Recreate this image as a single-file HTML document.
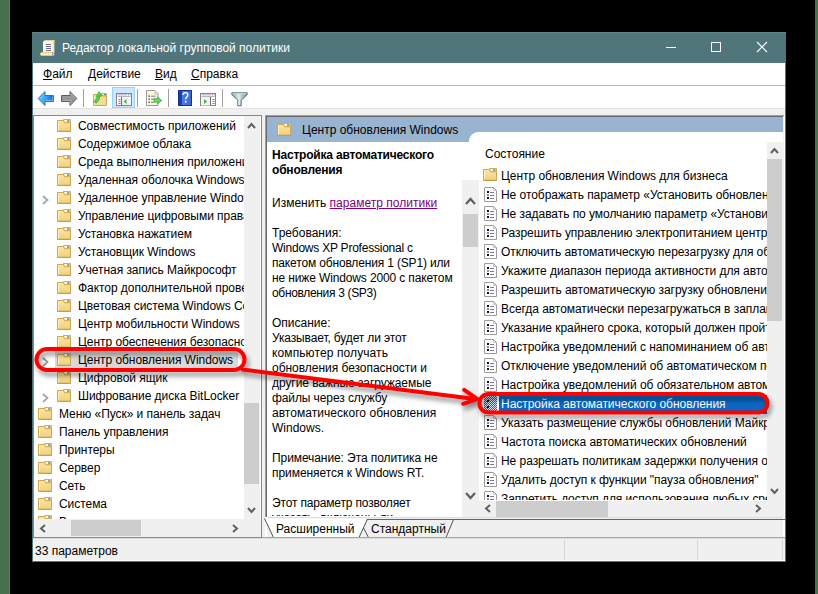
<!DOCTYPE html><html><head><meta charset="utf-8"><style>
*{margin:0;padding:0;box-sizing:border-box}
html,body{width:818px;height:594px;overflow:hidden;background:#000}
body{position:relative;font-family:"Liberation Sans",sans-serif;font-size:12px;color:#000}
.a{position:absolute}
.t{position:absolute;white-space:nowrap}
.u{text-decoration:underline}
svg{position:absolute;overflow:visible}
</style></head><body><div class="a" style="left:0px;top:0px;width:10px;height:594px;background:#48724f;border-right:1px solid #4f8057"></div>
<div class="a" style="left:815px;top:0px;width:3px;height:594px;background:#4b7150"></div>
<div class="a" style="left:32px;top:32px;width:754px;height:530px;background:#fff;border:1px solid #50757b"></div>
<div class="a" style="left:32px;top:32px;width:754px;height:31px;background:#50757b;border-top:1px solid #62858a"></div>
<svg style="left:38px;top:37.5px" width="20" height="20" viewBox="0 0 20 20">
<path d="M5.5 3.5L7 2.5h9.5l-.5 1V14.5H5.5z" fill="#fdf8e2" stroke="#d9d2ae" stroke-width="1"/>
<path d="M5.5 4v10" stroke="#fffef5"/>
<path d="M8 6.5h5M8 8.5h5M8 10.5h5M8 12.5h5" stroke="#6e6e96" stroke-width="1"/>
<path d="M16.5 3.2l1.3 1-1.3 1.8-.8-1z" fill="#c9963c"/>
<path d="M3.5 14.5h11.5c.6 0 1 .7 1 1.5s-.4 1.5-1 1.5H3.5c-.6 0-1-.7-1-1.5s.4-1.5 1-1.5z" fill="#fbf3cf" stroke="#d6c98e" stroke-width="1"/>
<path d="M5 16h1M7.5 16h1M10 16h1" stroke="#f0c870"/>
<path d="M14.5 14.5v3" stroke="#9a9ab0"/>
</svg>
<div class="t" style="left:62px;top:40px;line-height:16px;color:#fff">Редактор локальной групповой политики</div>
<div class="a" style="left:666px;top:47px;width:10px;height:1px;background:#fff"></div>
<div class="a" style="left:711px;top:42px;width:10px;height:10px;border:1px solid #fff"></div>
<svg style="left:756px;top:41px" width="12" height="12" viewBox="0 0 12 12"><path d="M1 1L11 11M11 1L1 11" stroke="#fff" stroke-width="1.1"/></svg>
<div class="a" style="left:33px;top:85px;width:752px;height:1px;background:#b9b9b9"></div>
<div class="t" style="left:43px;top:66px;line-height:16px;"><span class="u">Ф</span>айл</div>
<div class="t" style="left:88px;top:66px;line-height:16px;"><span class="u">Д</span>ействие</div>
<div class="t" style="left:155px;top:66px;line-height:16px;"><span class="u">В</span>ид</div>
<div class="t" style="left:191px;top:66px;line-height:16px;"><span class="u">С</span>правка</div>
<div class="a" style="left:33px;top:108px;width:752px;height:7px;background:#f0f0f0;border-top:1px solid #e3e3e3"></div>
<div class="a" style="left:83px;top:89px;width:1px;height:18px;background:#a0a0a0"></div>
<div class="a" style="left:137px;top:89px;width:1px;height:18px;background:#a0a0a0"></div>
<div class="a" style="left:168px;top:89px;width:1px;height:18px;background:#a0a0a0"></div>
<div class="a" style="left:222px;top:89px;width:1px;height:18px;background:#a0a0a0"></div>
<svg style="left:37px;top:90px" width="18" height="17" viewBox="0 0 18 17">
<defs><linearGradient id="gs" x1="0" y1="0" x2="1" y2="0"><stop offset="0" stop-color="#62c4fa"/><stop offset=".5" stop-color="#3aa4f0"/><stop offset="1" stop-color="#0a66d6"/></linearGradient></defs>
<path d="M1.2 8.5L8 1.5V5.5H16.5V11.5H8V15.5Z" fill="url(#gs)" stroke="#2a72c6" stroke-width="1" stroke-linejoin="round"/>
<path d="M3 8.5L7 4.5M9 10.5H15.5V6.5" fill="none" stroke="#9adcff" stroke-width=".8" opacity=".8"/>
</svg>
<svg style="left:60px;top:90px" width="18" height="17" viewBox="0 0 18 17">
<defs><linearGradient id="gg" x1="0" y1="0" x2="0" y2="1"><stop offset="0" stop-color="#a8a8a8"/><stop offset="1" stop-color="#858585"/></linearGradient></defs>
<path d="M16.8 8.5L10 1.5V5.5H1.5V11.5H10V15.5Z" fill="url(#gg)" stroke="#5c5c5c" stroke-width="1" stroke-linejoin="round"/>
<path d="M2.5 10.5H11V14M11 3.5L15.3 8.5" fill="none" stroke="#c8c8c8" stroke-width=".8" opacity=".7"/>
</svg>
<svg style="left:93px;top:91px" width="14" height="15" viewBox="0 0 14 15">
<path d="M8.5 2.5h5v3h-5z" fill="#f2d487" stroke="#d3ae5a"/>
<path d="M9.5 3h2v1.3h-2z" fill="#fff"/><path d="M10.8 3h2v1.3h-2z" fill="#3f86de"/>
<path d="M.5 3.5h6l1 1.5h6v9.5H.5z" fill="#f6dc92" stroke="#cfa74f"/>
<path d="M1.5 5v9" stroke="#fcefc2"/>
<path d="M2.8 10.5C4.5 8.8 5.5 7.8 5.8 5.2" fill="none" stroke="#2fa82f" stroke-width="3.2" stroke-linecap="round"/>
<path d="M2.8 10.5C4.5 8.8 5.5 7.8 5.8 5.2" fill="none" stroke="#55d855" stroke-width="2" stroke-linecap="round"/>
<path d="M3.2 5.6L6 .6 9.2 4.6z" fill="#55d855" stroke="#2fa82f" stroke-width=".7" stroke-linejoin="round"/>
</svg>
<div class="a" style="left:112px;top:87px;width:23px;height:21px;background:#cce8ff;border:1px solid #99d1ff"></div>
<svg style="left:116px;top:93px" width="16" height="13" viewBox="0 0 16 13">
<rect x=".5" y=".5" width="15" height="12" fill="#fff" stroke="#858585"/>
<path d="M1 1h14v3H1z" fill="#f6f6f6"/><path d="M1.5 1.8h9.5M1.5 3.5h13" stroke="#b8b0c8" stroke-width="1"/>
<path d="M12 1.8h1M13.8 1.8h1" stroke="#8a8a8a"/>
<path d="M5.5 4v8.5" stroke="#6f6f6f"/><path d="M6 4.5h9v7.5H6z" fill="#f2f2f2"/>
<path d="M2.5 6.5h2M2.5 8.5h2M2.5 10.5h2" stroke="#3c86d0" stroke-width="1"/>
<path d="M10.5 6L7.5 8.5 10.5 11z" fill="#3bbf3b"/>
</svg>
<svg style="left:146px;top:90px" width="17" height="16" viewBox="0 0 17 16">
<path d="M.5 .5h8.5l3 3v12H.5z" fill="#fdf6da" stroke="#9a9a9a"/>
<path d="M9 1v3h3" fill="#eee" stroke="#b8b8b8"/>
<path d="M2.5 5.5h1.3v1.3H2.5zM2.5 8.5h1.3v1.3H2.5zM2.5 11.5h1.3v1.3H2.5z" fill="#222"/>
<path d="M5 6.2h4.5M5 9.2h3M5 12.2h3" stroke="#7472b0" stroke-width="1"/>
<path d="M8 8.5h3.5V6.8l4.5 3.6-4.5 3.6v-1.7H8z" fill="#5bd05b" stroke="#3aa83a" stroke-width=".6" stroke-linejoin="round"/>
<path d="M9 10.4h4" stroke="#a8f0a8" stroke-width=".7" stroke-dasharray="1 1"/>
</svg>
<svg style="left:178px;top:90px" width="14" height="16" viewBox="0 0 14 16">
<defs><linearGradient id="gh" x1="0" y1="0" x2="1" y2="0"><stop offset="0" stop-color="#1a36a0"/><stop offset=".25" stop-color="#1f43b8"/><stop offset=".3" stop-color="#4a7de0"/><stop offset="1" stop-color="#3a68d0"/></linearGradient></defs>
<rect x=".5" y=".5" width="13" height="15" fill="url(#gh)" stroke="#16308e"/>
<path d="M5 5C5 3.4 6 2.6 7.4 2.6S9.8 3.5 9.8 4.9c0 1.9-2.1 2.2-2.1 4.4" fill="none" stroke="#fff" stroke-width="1.4"/>
<rect x="6.9" y="10.8" width="1.6" height="1.8" fill="#fff"/>
</svg>
<svg style="left:200px;top:93px" width="16" height="13" viewBox="0 0 16 13">
<rect x=".5" y=".5" width="15" height="12" fill="#fff" stroke="#858585"/>
<path d="M1 1h14v3H1z" fill="#f6f6f6"/><path d="M1.5 1.8h9.5M1.5 3.5h13" stroke="#b8b0c8" stroke-width="1"/>
<path d="M12 1.8h1M13.8 1.8h1" stroke="#8a8a8a"/>
<path d="M1 4h9.5v8.5H1z" fill="#f2f2f2"/>
<path d="M10.5 4v8.5" stroke="#6f6f6f"/>
<path d="M12.5 6.5h2M12.5 8.5h2M12.5 10.5h2" stroke="#3c86d0" stroke-width="1"/>
<path d="M4 6v5l3.2-2.5z" fill="#3bbf3b"/>
</svg>
<svg style="left:231px;top:92px" width="17" height="15" viewBox="0 0 17 15">
<defs><linearGradient id="gf" x1="0" y1="0" x2="1" y2="0"><stop offset="0" stop-color="#7d97a0"/><stop offset=".45" stop-color="#e4ecef"/><stop offset="1" stop-color="#6f8893"/></linearGradient></defs>
<path d="M.8 .8h15.4v1.8L10.2 8.2V13.8H6.8V8.2L.8 2.6z" fill="url(#gf)" stroke="#566f78" stroke-width="1" stroke-linejoin="round"/>
<path d="M1.5 1.8h14" stroke="#cfe0e6" stroke-width="1"/>
<path d="M8 9v4" stroke="#f4f8f9" stroke-width=".8"/>
</svg>
<div class="a" style="left:33px;top:115px;width:229px;height:423px;border:1px solid #828790;background:#fff"></div>
<div class="a" style="left:34px;top:116px;width:210px;height:403px;overflow:hidden">
<div class="a" style="left:21px;top:235px;width:183px;height:18px;background:#d9d9d9"></div>
<div class="t" style="left:44px;top:1px;line-height:18px;letter-spacing:-0.05px">Совместимость приложений</div>
<div class="t" style="left:44px;top:19px;line-height:18px;letter-spacing:-0.05px">Содержимое облака</div>
<div class="t" style="left:44px;top:37px;line-height:18px;letter-spacing:-0.05px">Среда выполнения приложений</div>
<div class="t" style="left:44px;top:55px;line-height:18px;letter-spacing:-0.05px">Удаленная оболочка Windows</div>
<div class="t" style="left:44px;top:73px;line-height:18px;letter-spacing:-0.05px">Удаленное управление Windows</div>
<div class="t" style="left:44px;top:91px;line-height:18px;letter-spacing:-0.05px">Управление цифровыми правами</div>
<div class="t" style="left:44px;top:109px;line-height:18px;letter-spacing:-0.05px">Установка нажатием</div>
<div class="t" style="left:44px;top:127px;line-height:18px;letter-spacing:-0.05px">Установщик Windows</div>
<div class="t" style="left:44px;top:145px;line-height:18px;letter-spacing:-0.05px">Учетная запись Майкрософт</div>
<div class="t" style="left:44px;top:163px;line-height:18px;letter-spacing:-0.05px">Фактор дополнительной проверки</div>
<div class="t" style="left:44px;top:181px;line-height:18px;letter-spacing:-0.05px">Цветовая система Windows Color System</div>
<div class="t" style="left:44px;top:199px;line-height:18px;letter-spacing:-0.05px">Центр мобильности Windows</div>
<div class="t" style="left:44px;top:217px;line-height:18px;letter-spacing:-0.05px">Центр обеспечения безопасности</div>
<div class="t" style="left:44px;top:235px;line-height:18px;letter-spacing:-0.05px">Центр обновления Windows</div>
<div class="t" style="left:44px;top:253px;line-height:18px;letter-spacing:-0.05px">Цифровой ящик</div>
<div class="t" style="left:44px;top:271px;line-height:18px;letter-spacing:-0.05px">Шифрование диска BitLocker</div>
<div class="t" style="left:25px;top:289px;line-height:18px;letter-spacing:-0.05px">Меню «Пуск» и панель задач</div>
<div class="t" style="left:25px;top:307px;line-height:18px;letter-spacing:-0.05px">Панель управления</div>
<div class="t" style="left:25px;top:325px;line-height:18px;letter-spacing:-0.05px">Принтеры</div>
<div class="t" style="left:25px;top:343px;line-height:18px;letter-spacing:-0.05px">Сервер</div>
<div class="t" style="left:25px;top:361px;line-height:18px;letter-spacing:-0.05px">Сеть</div>
<div class="t" style="left:25px;top:379px;line-height:18px;letter-spacing:-0.05px">Система</div>
<div class="t" style="left:25px;top:397px;line-height:18px;letter-spacing:-0.05px">Все параметры</div>
</div>
<svg style="left:57px;top:119px" width="14" height="13" viewBox="0 0 14 13">
<defs><linearGradient id="gfo1" x1="0" y1="0" x2="0" y2="1"><stop offset="0" stop-color="#fae6a6"/><stop offset="1" stop-color="#f0cf7c"/></linearGradient></defs>
<path d="M6.5 .5h7v4h-7z" fill="#f2d487" stroke="#d3ae5a"/>
<path d="M7.5 1.2h2.5v1.6H7.5z" fill="#fff"/><path d="M10.2 1.4h2v1.3h-2z" fill="#3f86de"/>
<path d="M.5 1.5h6l1 2.3h6v8.7H.5z" fill="url(#gfo1)" stroke="#cfa74f"/>
<path d="M1.5 2.5v9" stroke="#fcefc2" stroke-width="1"/>
<path d="M1 12.3h12.5" stroke="#c39a44"/>
</svg>
<svg style="left:57px;top:137px" width="14" height="13" viewBox="0 0 14 13">
<defs><linearGradient id="gfo2" x1="0" y1="0" x2="0" y2="1"><stop offset="0" stop-color="#fae6a6"/><stop offset="1" stop-color="#f0cf7c"/></linearGradient></defs>
<path d="M6.5 .5h7v4h-7z" fill="#f2d487" stroke="#d3ae5a"/>
<path d="M7.5 1.2h2.5v1.6H7.5z" fill="#fff"/><path d="M10.2 1.4h2v1.3h-2z" fill="#3f86de"/>
<path d="M.5 1.5h6l1 2.3h6v8.7H.5z" fill="url(#gfo2)" stroke="#cfa74f"/>
<path d="M1.5 2.5v9" stroke="#fcefc2" stroke-width="1"/>
<path d="M1 12.3h12.5" stroke="#c39a44"/>
</svg>
<svg style="left:57px;top:155px" width="14" height="13" viewBox="0 0 14 13">
<defs><linearGradient id="gfo3" x1="0" y1="0" x2="0" y2="1"><stop offset="0" stop-color="#fae6a6"/><stop offset="1" stop-color="#f0cf7c"/></linearGradient></defs>
<path d="M6.5 .5h7v4h-7z" fill="#f2d487" stroke="#d3ae5a"/>
<path d="M7.5 1.2h2.5v1.6H7.5z" fill="#fff"/><path d="M10.2 1.4h2v1.3h-2z" fill="#3f86de"/>
<path d="M.5 1.5h6l1 2.3h6v8.7H.5z" fill="url(#gfo3)" stroke="#cfa74f"/>
<path d="M1.5 2.5v9" stroke="#fcefc2" stroke-width="1"/>
<path d="M1 12.3h12.5" stroke="#c39a44"/>
</svg>
<svg style="left:57px;top:173px" width="14" height="13" viewBox="0 0 14 13">
<defs><linearGradient id="gfo4" x1="0" y1="0" x2="0" y2="1"><stop offset="0" stop-color="#fae6a6"/><stop offset="1" stop-color="#f0cf7c"/></linearGradient></defs>
<path d="M6.5 .5h7v4h-7z" fill="#f2d487" stroke="#d3ae5a"/>
<path d="M7.5 1.2h2.5v1.6H7.5z" fill="#fff"/><path d="M10.2 1.4h2v1.3h-2z" fill="#3f86de"/>
<path d="M.5 1.5h6l1 2.3h6v8.7H.5z" fill="url(#gfo4)" stroke="#cfa74f"/>
<path d="M1.5 2.5v9" stroke="#fcefc2" stroke-width="1"/>
<path d="M1 12.3h12.5" stroke="#c39a44"/>
</svg>
<svg style="left:57px;top:191px" width="14" height="13" viewBox="0 0 14 13">
<defs><linearGradient id="gfo5" x1="0" y1="0" x2="0" y2="1"><stop offset="0" stop-color="#fae6a6"/><stop offset="1" stop-color="#f0cf7c"/></linearGradient></defs>
<path d="M6.5 .5h7v4h-7z" fill="#f2d487" stroke="#d3ae5a"/>
<path d="M7.5 1.2h2.5v1.6H7.5z" fill="#fff"/><path d="M10.2 1.4h2v1.3h-2z" fill="#3f86de"/>
<path d="M.5 1.5h6l1 2.3h6v8.7H.5z" fill="url(#gfo5)" stroke="#cfa74f"/>
<path d="M1.5 2.5v9" stroke="#fcefc2" stroke-width="1"/>
<path d="M1 12.3h12.5" stroke="#c39a44"/>
</svg>
<svg style="left:42px;top:194.5px" width="6.5" height="10" viewBox="0 0 6.5 10"><path d="M1 1L5.5 5.0L1 9" fill="none" stroke="#a6a6a6" stroke-width="1.8"/></svg>
<svg style="left:57px;top:209px" width="14" height="13" viewBox="0 0 14 13">
<defs><linearGradient id="gfo6" x1="0" y1="0" x2="0" y2="1"><stop offset="0" stop-color="#fae6a6"/><stop offset="1" stop-color="#f0cf7c"/></linearGradient></defs>
<path d="M6.5 .5h7v4h-7z" fill="#f2d487" stroke="#d3ae5a"/>
<path d="M7.5 1.2h2.5v1.6H7.5z" fill="#fff"/><path d="M10.2 1.4h2v1.3h-2z" fill="#3f86de"/>
<path d="M.5 1.5h6l1 2.3h6v8.7H.5z" fill="url(#gfo6)" stroke="#cfa74f"/>
<path d="M1.5 2.5v9" stroke="#fcefc2" stroke-width="1"/>
<path d="M1 12.3h12.5" stroke="#c39a44"/>
</svg>
<svg style="left:57px;top:227px" width="14" height="13" viewBox="0 0 14 13">
<defs><linearGradient id="gfo7" x1="0" y1="0" x2="0" y2="1"><stop offset="0" stop-color="#fae6a6"/><stop offset="1" stop-color="#f0cf7c"/></linearGradient></defs>
<path d="M6.5 .5h7v4h-7z" fill="#f2d487" stroke="#d3ae5a"/>
<path d="M7.5 1.2h2.5v1.6H7.5z" fill="#fff"/><path d="M10.2 1.4h2v1.3h-2z" fill="#3f86de"/>
<path d="M.5 1.5h6l1 2.3h6v8.7H.5z" fill="url(#gfo7)" stroke="#cfa74f"/>
<path d="M1.5 2.5v9" stroke="#fcefc2" stroke-width="1"/>
<path d="M1 12.3h12.5" stroke="#c39a44"/>
</svg>
<svg style="left:57px;top:245px" width="14" height="13" viewBox="0 0 14 13">
<defs><linearGradient id="gfo8" x1="0" y1="0" x2="0" y2="1"><stop offset="0" stop-color="#fae6a6"/><stop offset="1" stop-color="#f0cf7c"/></linearGradient></defs>
<path d="M6.5 .5h7v4h-7z" fill="#f2d487" stroke="#d3ae5a"/>
<path d="M7.5 1.2h2.5v1.6H7.5z" fill="#fff"/><path d="M10.2 1.4h2v1.3h-2z" fill="#3f86de"/>
<path d="M.5 1.5h6l1 2.3h6v8.7H.5z" fill="url(#gfo8)" stroke="#cfa74f"/>
<path d="M1.5 2.5v9" stroke="#fcefc2" stroke-width="1"/>
<path d="M1 12.3h12.5" stroke="#c39a44"/>
</svg>
<svg style="left:57px;top:263px" width="14" height="13" viewBox="0 0 14 13">
<defs><linearGradient id="gfo9" x1="0" y1="0" x2="0" y2="1"><stop offset="0" stop-color="#fae6a6"/><stop offset="1" stop-color="#f0cf7c"/></linearGradient></defs>
<path d="M6.5 .5h7v4h-7z" fill="#f2d487" stroke="#d3ae5a"/>
<path d="M7.5 1.2h2.5v1.6H7.5z" fill="#fff"/><path d="M10.2 1.4h2v1.3h-2z" fill="#3f86de"/>
<path d="M.5 1.5h6l1 2.3h6v8.7H.5z" fill="url(#gfo9)" stroke="#cfa74f"/>
<path d="M1.5 2.5v9" stroke="#fcefc2" stroke-width="1"/>
<path d="M1 12.3h12.5" stroke="#c39a44"/>
</svg>
<svg style="left:57px;top:281px" width="14" height="13" viewBox="0 0 14 13">
<defs><linearGradient id="gfo10" x1="0" y1="0" x2="0" y2="1"><stop offset="0" stop-color="#fae6a6"/><stop offset="1" stop-color="#f0cf7c"/></linearGradient></defs>
<path d="M6.5 .5h7v4h-7z" fill="#f2d487" stroke="#d3ae5a"/>
<path d="M7.5 1.2h2.5v1.6H7.5z" fill="#fff"/><path d="M10.2 1.4h2v1.3h-2z" fill="#3f86de"/>
<path d="M.5 1.5h6l1 2.3h6v8.7H.5z" fill="url(#gfo10)" stroke="#cfa74f"/>
<path d="M1.5 2.5v9" stroke="#fcefc2" stroke-width="1"/>
<path d="M1 12.3h12.5" stroke="#c39a44"/>
</svg>
<svg style="left:57px;top:299px" width="14" height="13" viewBox="0 0 14 13">
<defs><linearGradient id="gfo11" x1="0" y1="0" x2="0" y2="1"><stop offset="0" stop-color="#fae6a6"/><stop offset="1" stop-color="#f0cf7c"/></linearGradient></defs>
<path d="M6.5 .5h7v4h-7z" fill="#f2d487" stroke="#d3ae5a"/>
<path d="M7.5 1.2h2.5v1.6H7.5z" fill="#fff"/><path d="M10.2 1.4h2v1.3h-2z" fill="#3f86de"/>
<path d="M.5 1.5h6l1 2.3h6v8.7H.5z" fill="url(#gfo11)" stroke="#cfa74f"/>
<path d="M1.5 2.5v9" stroke="#fcefc2" stroke-width="1"/>
<path d="M1 12.3h12.5" stroke="#c39a44"/>
</svg>
<svg style="left:57px;top:317px" width="14" height="13" viewBox="0 0 14 13">
<defs><linearGradient id="gfo12" x1="0" y1="0" x2="0" y2="1"><stop offset="0" stop-color="#fae6a6"/><stop offset="1" stop-color="#f0cf7c"/></linearGradient></defs>
<path d="M6.5 .5h7v4h-7z" fill="#f2d487" stroke="#d3ae5a"/>
<path d="M7.5 1.2h2.5v1.6H7.5z" fill="#fff"/><path d="M10.2 1.4h2v1.3h-2z" fill="#3f86de"/>
<path d="M.5 1.5h6l1 2.3h6v8.7H.5z" fill="url(#gfo12)" stroke="#cfa74f"/>
<path d="M1.5 2.5v9" stroke="#fcefc2" stroke-width="1"/>
<path d="M1 12.3h12.5" stroke="#c39a44"/>
</svg>
<svg style="left:57px;top:335px" width="14" height="13" viewBox="0 0 14 13">
<defs><linearGradient id="gfo13" x1="0" y1="0" x2="0" y2="1"><stop offset="0" stop-color="#fae6a6"/><stop offset="1" stop-color="#f0cf7c"/></linearGradient></defs>
<path d="M6.5 .5h7v4h-7z" fill="#f2d487" stroke="#d3ae5a"/>
<path d="M7.5 1.2h2.5v1.6H7.5z" fill="#fff"/><path d="M10.2 1.4h2v1.3h-2z" fill="#3f86de"/>
<path d="M.5 1.5h6l1 2.3h6v8.7H.5z" fill="url(#gfo13)" stroke="#cfa74f"/>
<path d="M1.5 2.5v9" stroke="#fcefc2" stroke-width="1"/>
<path d="M1 12.3h12.5" stroke="#c39a44"/>
</svg>
<svg style="left:57px;top:353px" width="14" height="13" viewBox="0 0 14 13">
<defs><linearGradient id="gfo14" x1="0" y1="0" x2="0" y2="1"><stop offset="0" stop-color="#fae6a6"/><stop offset="1" stop-color="#f0cf7c"/></linearGradient></defs>
<path d="M6.5 .5h7v4h-7z" fill="#f2d487" stroke="#d3ae5a"/>
<path d="M7.5 1.2h2.5v1.6H7.5z" fill="#fff"/><path d="M10.2 1.4h2v1.3h-2z" fill="#3f86de"/>
<path d="M.5 1.5h6l1 2.3h6v8.7H.5z" fill="url(#gfo14)" stroke="#cfa74f"/>
<path d="M1.5 2.5v9" stroke="#fcefc2" stroke-width="1"/>
<path d="M1 12.3h12.5" stroke="#c39a44"/>
</svg>
<svg style="left:42px;top:356.5px" width="6.5" height="10" viewBox="0 0 6.5 10"><path d="M1 1L5.5 5.0L1 9" fill="none" stroke="#989898" stroke-width="1.8"/></svg>
<svg style="left:57px;top:371px" width="14" height="13" viewBox="0 0 14 13">
<defs><linearGradient id="gfo15" x1="0" y1="0" x2="0" y2="1"><stop offset="0" stop-color="#fae6a6"/><stop offset="1" stop-color="#f0cf7c"/></linearGradient></defs>
<path d="M6.5 .5h7v4h-7z" fill="#f2d487" stroke="#d3ae5a"/>
<path d="M7.5 1.2h2.5v1.6H7.5z" fill="#fff"/><path d="M10.2 1.4h2v1.3h-2z" fill="#3f86de"/>
<path d="M.5 1.5h6l1 2.3h6v8.7H.5z" fill="url(#gfo15)" stroke="#cfa74f"/>
<path d="M1.5 2.5v9" stroke="#fcefc2" stroke-width="1"/>
<path d="M1 12.3h12.5" stroke="#c39a44"/>
</svg>
<svg style="left:57px;top:389px" width="14" height="13" viewBox="0 0 14 13">
<defs><linearGradient id="gfo16" x1="0" y1="0" x2="0" y2="1"><stop offset="0" stop-color="#fae6a6"/><stop offset="1" stop-color="#f0cf7c"/></linearGradient></defs>
<path d="M6.5 .5h7v4h-7z" fill="#f2d487" stroke="#d3ae5a"/>
<path d="M7.5 1.2h2.5v1.6H7.5z" fill="#fff"/><path d="M10.2 1.4h2v1.3h-2z" fill="#3f86de"/>
<path d="M.5 1.5h6l1 2.3h6v8.7H.5z" fill="url(#gfo16)" stroke="#cfa74f"/>
<path d="M1.5 2.5v9" stroke="#fcefc2" stroke-width="1"/>
<path d="M1 12.3h12.5" stroke="#c39a44"/>
</svg>
<svg style="left:42px;top:392.5px" width="6.5" height="10" viewBox="0 0 6.5 10"><path d="M1 1L5.5 5.0L1 9" fill="none" stroke="#a6a6a6" stroke-width="1.8"/></svg>
<svg style="left:38px;top:407px" width="14" height="13" viewBox="0 0 14 13">
<defs><linearGradient id="gfo17" x1="0" y1="0" x2="0" y2="1"><stop offset="0" stop-color="#fae6a6"/><stop offset="1" stop-color="#f0cf7c"/></linearGradient></defs>
<path d="M6.5 .5h7v4h-7z" fill="#f2d487" stroke="#d3ae5a"/>
<path d="M7.5 1.2h2.5v1.6H7.5z" fill="#fff"/><path d="M10.2 1.4h2v1.3h-2z" fill="#3f86de"/>
<path d="M.5 1.5h6l1 2.3h6v8.7H.5z" fill="url(#gfo17)" stroke="#cfa74f"/>
<path d="M1.5 2.5v9" stroke="#fcefc2" stroke-width="1"/>
<path d="M1 12.3h12.5" stroke="#c39a44"/>
</svg>
<svg style="left:38px;top:425px" width="14" height="13" viewBox="0 0 14 13">
<defs><linearGradient id="gfo18" x1="0" y1="0" x2="0" y2="1"><stop offset="0" stop-color="#fae6a6"/><stop offset="1" stop-color="#f0cf7c"/></linearGradient></defs>
<path d="M6.5 .5h7v4h-7z" fill="#f2d487" stroke="#d3ae5a"/>
<path d="M7.5 1.2h2.5v1.6H7.5z" fill="#fff"/><path d="M10.2 1.4h2v1.3h-2z" fill="#3f86de"/>
<path d="M.5 1.5h6l1 2.3h6v8.7H.5z" fill="url(#gfo18)" stroke="#cfa74f"/>
<path d="M1.5 2.5v9" stroke="#fcefc2" stroke-width="1"/>
<path d="M1 12.3h12.5" stroke="#c39a44"/>
</svg>
<svg style="left:38px;top:443px" width="14" height="13" viewBox="0 0 14 13">
<defs><linearGradient id="gfo19" x1="0" y1="0" x2="0" y2="1"><stop offset="0" stop-color="#fae6a6"/><stop offset="1" stop-color="#f0cf7c"/></linearGradient></defs>
<path d="M6.5 .5h7v4h-7z" fill="#f2d487" stroke="#d3ae5a"/>
<path d="M7.5 1.2h2.5v1.6H7.5z" fill="#fff"/><path d="M10.2 1.4h2v1.3h-2z" fill="#3f86de"/>
<path d="M.5 1.5h6l1 2.3h6v8.7H.5z" fill="url(#gfo19)" stroke="#cfa74f"/>
<path d="M1.5 2.5v9" stroke="#fcefc2" stroke-width="1"/>
<path d="M1 12.3h12.5" stroke="#c39a44"/>
</svg>
<svg style="left:38px;top:461px" width="14" height="13" viewBox="0 0 14 13">
<defs><linearGradient id="gfo20" x1="0" y1="0" x2="0" y2="1"><stop offset="0" stop-color="#fae6a6"/><stop offset="1" stop-color="#f0cf7c"/></linearGradient></defs>
<path d="M6.5 .5h7v4h-7z" fill="#f2d487" stroke="#d3ae5a"/>
<path d="M7.5 1.2h2.5v1.6H7.5z" fill="#fff"/><path d="M10.2 1.4h2v1.3h-2z" fill="#3f86de"/>
<path d="M.5 1.5h6l1 2.3h6v8.7H.5z" fill="url(#gfo20)" stroke="#cfa74f"/>
<path d="M1.5 2.5v9" stroke="#fcefc2" stroke-width="1"/>
<path d="M1 12.3h12.5" stroke="#c39a44"/>
</svg>
<svg style="left:38px;top:479px" width="14" height="13" viewBox="0 0 14 13">
<defs><linearGradient id="gfo21" x1="0" y1="0" x2="0" y2="1"><stop offset="0" stop-color="#fae6a6"/><stop offset="1" stop-color="#f0cf7c"/></linearGradient></defs>
<path d="M6.5 .5h7v4h-7z" fill="#f2d487" stroke="#d3ae5a"/>
<path d="M7.5 1.2h2.5v1.6H7.5z" fill="#fff"/><path d="M10.2 1.4h2v1.3h-2z" fill="#3f86de"/>
<path d="M.5 1.5h6l1 2.3h6v8.7H.5z" fill="url(#gfo21)" stroke="#cfa74f"/>
<path d="M1.5 2.5v9" stroke="#fcefc2" stroke-width="1"/>
<path d="M1 12.3h12.5" stroke="#c39a44"/>
</svg>
<svg style="left:38px;top:497px" width="14" height="13" viewBox="0 0 14 13">
<defs><linearGradient id="gfo22" x1="0" y1="0" x2="0" y2="1"><stop offset="0" stop-color="#fae6a6"/><stop offset="1" stop-color="#f0cf7c"/></linearGradient></defs>
<path d="M6.5 .5h7v4h-7z" fill="#f2d487" stroke="#d3ae5a"/>
<path d="M7.5 1.2h2.5v1.6H7.5z" fill="#fff"/><path d="M10.2 1.4h2v1.3h-2z" fill="#3f86de"/>
<path d="M.5 1.5h6l1 2.3h6v8.7H.5z" fill="url(#gfo22)" stroke="#cfa74f"/>
<path d="M1.5 2.5v9" stroke="#fcefc2" stroke-width="1"/>
<path d="M1 12.3h12.5" stroke="#c39a44"/>
</svg>
<div class="a" style="left:38px;top:515px;width:14px;height:4px;overflow:hidden">
<svg style="left:0px;top:0px" width="14" height="13" viewBox="0 0 14 13">
<defs><linearGradient id="gfoc" x1="0" y1="0" x2="0" y2="1"><stop offset="0" stop-color="#fae6a6"/><stop offset="1" stop-color="#f0cf7c"/></linearGradient></defs>
<path d="M6.5 .5h7v4h-7z" fill="#f2d487" stroke="#d3ae5a"/>
<path d="M7.5 1.2h2.5v1.6H7.5z" fill="#fff"/><path d="M10.2 1.4h2v1.3h-2z" fill="#3f86de"/>
<path d="M.5 1.5h6l1 2.3h6v8.7H.5z" fill="url(#gfoc)" stroke="#cfa74f"/>
<path d="M1.5 2.5v9" stroke="#fcefc2" stroke-width="1"/>
<path d="M1 12.3h12.5" stroke="#c39a44"/>
</svg>
</div>
<div class="a" style="left:244px;top:116px;width:16px;height:403px;background:#f0f0f0"></div>
<div class="a" style="left:244px;top:403px;width:15px;height:81px;background:#cdcdcd"></div>
<svg style="left:247px;top:123px" width="9" height="6" viewBox="0 0 9 6"><path d="M1 5L4.5 1L8 5" fill="none" stroke="#606060" stroke-width="2"/></svg>
<svg style="left:247px;top:507px" width="9" height="6" viewBox="0 0 9 6"><path d="M1 1L4.5 5L8 1" fill="none" stroke="#606060" stroke-width="2"/></svg>
<div class="a" style="left:34px;top:519px;width:227px;height:18px;background:#f0f0f0"></div>
<div class="a" style="left:71px;top:520px;width:70px;height:16px;background:#cdcdcd"></div>
<svg style="left:40px;top:524px" width="6" height="9" viewBox="0 0 6 9"><path d="M5 1L1 4.5L5 8" fill="none" stroke="#606060" stroke-width="2"/></svg>
<svg style="left:232px;top:524px" width="6" height="9" viewBox="0 0 6 9"><path d="M1 1L5 4.5L1 8" fill="none" stroke="#606060" stroke-width="2"/></svg>
<div class="a" style="left:33px;top:538px;width:752px;height:22px;background:#f0f0f0;border-top:1px solid #dcdcdc"></div>
<div class="a" style="left:564px;top:540px;width:1px;height:20px;background:#d7d7d7"></div>
<div class="a" style="left:697px;top:540px;width:1px;height:20px;background:#d7d7d7"></div>
<div class="a" style="left:782px;top:540px;width:1px;height:20px;background:#d7d7d7"></div>
<div class="t" style="left:35px;top:543px;line-height:16px;">33 параметров</div>
<div class="a" style="left:262px;top:115px;width:3px;height:423px;background:#f0f0f0"></div>
<div class="a" style="left:265px;top:115px;width:519px;height:402px;background:#fff;border-top:1px solid #a0a0a0;border-left:1px solid #a0a0a0"></div>
<div class="a" style="left:266px;top:116px;width:518px;height:401px;border-top:1px solid #696969;border-left:1px solid #696969"></div>
<div class="a" style="left:267px;top:117px;width:516px;height:25px;background:#99b4d1"></div>
<svg style="left:277px;top:123px" width="14" height="13" viewBox="0 0 14 13">
<defs><linearGradient id="gfo23" x1="0" y1="0" x2="0" y2="1"><stop offset="0" stop-color="#fae6a6"/><stop offset="1" stop-color="#f0cf7c"/></linearGradient></defs>
<path d="M6.5 .5h7v4h-7z" fill="#f2d487" stroke="#d3ae5a"/>
<path d="M7.5 1.2h2.5v1.6H7.5z" fill="#fff"/><path d="M10.2 1.4h2v1.3h-2z" fill="#3f86de"/>
<path d="M.5 1.5h6l1 2.3h6v8.7H.5z" fill="url(#gfo23)" stroke="#cfa74f"/>
<path d="M1.5 2.5v9" stroke="#fcefc2" stroke-width="1"/>
<path d="M1 12.3h12.5" stroke="#c39a44"/>
</svg>
<div class="t" style="left:302px;top:121px;line-height:18px;">Центр обновления Windows</div>
<div class="a" style="left:469px;top:132px;width:314px;height:12px;background:#fff;border-top-left-radius:9px"></div>
<div class="a" style="left:783px;top:116px;width:1px;height:401px;background:#f0f0f0"></div>
<div class="t" style="left:272px;top:148px;line-height:15px;letter-spacing:-0.2px"><b>Настройка автоматического<br>обновления</b></div>
<div class="a" style="left:267px;top:142px;width:195px;height:374px;overflow:hidden">
<div class="t" style="left:5px;top:54px;line-height:15px;letter-spacing:0.016px">Изменить <span style="color:#800080;text-decoration:underline">параметр политики</span></div><div class="t" style="left:5px;top:84px;line-height:15px;letter-spacing:0px">Требования:</div><div class="t" style="left:5px;top:99px;line-height:15px;letter-spacing:-0.229px">Windows XP Professional с</div><div class="t" style="left:5px;top:114px;line-height:15px;letter-spacing:-0.159px">пакетом обновления 1 (SP1) или</div><div class="t" style="left:5px;top:129px;line-height:15px;letter-spacing:-0.133px">не ниже Windows 2000 с пакетом</div><div class="t" style="left:5px;top:144px;line-height:15px;letter-spacing:-0.332px">обновления 3 (SP3)</div><div class="t" style="left:5px;top:174px;line-height:15px;letter-spacing:0px">Описание:</div><div class="t" style="left:5px;top:189px;line-height:15px;letter-spacing:-0.133px">Указывает, будет ли этот</div><div class="t" style="left:5px;top:204px;line-height:15px;letter-spacing:0.107px">компьютер получать</div><div class="t" style="left:5px;top:219px;line-height:15px;letter-spacing:-0.032px">обновления безопасности и</div><div class="t" style="left:5px;top:234px;line-height:15px;letter-spacing:-0.067px">другие важные загружаемые</div><div class="t" style="left:5px;top:249px;line-height:15px;letter-spacing:-0.098px">файлы через службу</div><div class="t" style="left:5px;top:264px;line-height:15px;letter-spacing:0.04px">автоматического обновления</div><div class="t" style="left:5px;top:279px;line-height:15px;letter-spacing:0px">Windows.</div><div class="t" style="left:5px;top:309px;line-height:15px;letter-spacing:-0.084px">Примечание: Эта политика не</div><div class="t" style="left:5px;top:324px;line-height:15px;letter-spacing:-0.059px">применяется к Windows RT.</div><div class="t" style="left:5px;top:354px;line-height:15px;letter-spacing:-0.163px">Этот параметр позволяет</div><div class="t" style="left:5px;top:369px;line-height:15px;letter-spacing:0px">указать, включены ли</div>
</div>
<div class="a" style="left:462px;top:180px;width:17px;height:337px;background:#f0f0f0"></div>
<div class="a" style="left:463px;top:214px;width:15px;height:33px;background:#cdcdcd"></div>
<svg style="left:465px;top:198px" width="11" height="7" viewBox="0 0 11 7"><path d="M1 6L5.5 1L10 6" fill="none" stroke="#606060" stroke-width="2.2"/></svg>
<svg style="left:465px;top:492px" width="11" height="7" viewBox="0 0 11 7"><path d="M1 1L5.5 6L10 1" fill="none" stroke="#606060" stroke-width="2.2"/></svg>
<div class="t" style="left:485px;top:145px;line-height:19px;">Состояние</div>
<div class="a" style="left:479px;top:142px;width:288px;height:358px;overflow:hidden">
<div class="t" style="left:22px;top:25px;line-height:19px;letter-spacing:-0.05px">Центр обновления Windows для бизнеса</div>
<svg style="left:4px;top:26px" width="14" height="13" viewBox="0 0 14 13">
<defs><linearGradient id="gfoL" x1="0" y1="0" x2="0" y2="1"><stop offset="0" stop-color="#fae6a6"/><stop offset="1" stop-color="#f0cf7c"/></linearGradient></defs>
<path d="M6.5 .5h7v4h-7z" fill="#f2d487" stroke="#d3ae5a"/>
<path d="M7.5 1.2h2.5v1.6H7.5z" fill="#fff"/><path d="M10.2 1.4h2v1.3h-2z" fill="#3f86de"/>
<path d="M.5 1.5h6l1 2.3h6v8.7H.5z" fill="url(#gfoL)" stroke="#cfa74f"/>
<path d="M1.5 2.5v9" stroke="#fcefc2" stroke-width="1"/>
<path d="M1 12.3h12.5" stroke="#c39a44"/>
</svg>
<div class="t" style="left:22px;top:44px;line-height:19px;letter-spacing:-0.05px">Не отображать параметр «Установить обновления и завершить работу»</div>
<svg style="left:5px;top:45px" width="13" height="15" viewBox="0 0 13 15">
<path d="M.5 .5h9l3 3v11H.5z" fill="#fff" stroke="#9c9c9c"/>
<path d="M9.5 1v2.5H12" fill="#eee" stroke="#c4c4c4"/>
<path d="M3 4h2v2H3zM3 10h2v2H3z" fill="#111"/><path d="M3 7h2v2H3z" fill="#8a86b8"/>
<path d="M6 5.5h4M6 8.5h4M6 11.5h4" stroke="#7a76a8"/>
</svg>
<div class="t" style="left:22px;top:63px;line-height:19px;letter-spacing:-0.05px">Не задавать по умолчанию параметр «Установить обновления и завершить работу»</div>
<svg style="left:5px;top:64px" width="13" height="15" viewBox="0 0 13 15">
<path d="M.5 .5h9l3 3v11H.5z" fill="#fff" stroke="#9c9c9c"/>
<path d="M9.5 1v2.5H12" fill="#eee" stroke="#c4c4c4"/>
<path d="M3 4h2v2H3zM3 10h2v2H3z" fill="#111"/><path d="M3 7h2v2H3z" fill="#8a86b8"/>
<path d="M6 5.5h4M6 8.5h4M6 11.5h4" stroke="#7a76a8"/>
</svg>
<div class="t" style="left:22px;top:82px;line-height:19px;letter-spacing:-0.05px">Разрешить управлению электропитанием центра обновления Windows</div>
<svg style="left:5px;top:83px" width="13" height="15" viewBox="0 0 13 15">
<path d="M.5 .5h9l3 3v11H.5z" fill="#fff" stroke="#9c9c9c"/>
<path d="M9.5 1v2.5H12" fill="#eee" stroke="#c4c4c4"/>
<path d="M3 4h2v2H3zM3 10h2v2H3z" fill="#111"/><path d="M3 7h2v2H3z" fill="#8a86b8"/>
<path d="M6 5.5h4M6 8.5h4M6 11.5h4" stroke="#7a76a8"/>
</svg>
<div class="t" style="left:22px;top:101px;line-height:19px;letter-spacing:-0.05px">Отключить автоматическую перезагрузку для обновлений</div>
<svg style="left:5px;top:102px" width="13" height="15" viewBox="0 0 13 15">
<path d="M.5 .5h9l3 3v11H.5z" fill="#fff" stroke="#9c9c9c"/>
<path d="M9.5 1v2.5H12" fill="#eee" stroke="#c4c4c4"/>
<path d="M3 4h2v2H3zM3 10h2v2H3z" fill="#111"/><path d="M3 7h2v2H3z" fill="#8a86b8"/>
<path d="M6 5.5h4M6 8.5h4M6 11.5h4" stroke="#7a76a8"/>
</svg>
<div class="t" style="left:22px;top:120px;line-height:19px;letter-spacing:-0.05px">Укажите диапазон периода активности для автоматической перезагрузки</div>
<svg style="left:5px;top:121px" width="13" height="15" viewBox="0 0 13 15">
<path d="M.5 .5h9l3 3v11H.5z" fill="#fff" stroke="#9c9c9c"/>
<path d="M9.5 1v2.5H12" fill="#eee" stroke="#c4c4c4"/>
<path d="M3 4h2v2H3zM3 10h2v2H3z" fill="#111"/><path d="M3 7h2v2H3z" fill="#8a86b8"/>
<path d="M6 5.5h4M6 8.5h4M6 11.5h4" stroke="#7a76a8"/>
</svg>
<div class="t" style="left:22px;top:139px;line-height:19px;letter-spacing:-0.05px">Разрешить автоматическую загрузку обновлений через лимитные подключения</div>
<svg style="left:5px;top:140px" width="13" height="15" viewBox="0 0 13 15">
<path d="M.5 .5h9l3 3v11H.5z" fill="#fff" stroke="#9c9c9c"/>
<path d="M9.5 1v2.5H12" fill="#eee" stroke="#c4c4c4"/>
<path d="M3 4h2v2H3zM3 10h2v2H3z" fill="#111"/><path d="M3 7h2v2H3z" fill="#8a86b8"/>
<path d="M6 5.5h4M6 8.5h4M6 11.5h4" stroke="#7a76a8"/>
</svg>
<div class="t" style="left:22px;top:158px;line-height:19px;letter-spacing:-0.05px">Всегда автоматически перезагружаться в запланированное время</div>
<svg style="left:5px;top:159px" width="13" height="15" viewBox="0 0 13 15">
<path d="M.5 .5h9l3 3v11H.5z" fill="#fff" stroke="#9c9c9c"/>
<path d="M9.5 1v2.5H12" fill="#eee" stroke="#c4c4c4"/>
<path d="M3 4h2v2H3zM3 10h2v2H3z" fill="#111"/><path d="M3 7h2v2H3z" fill="#8a86b8"/>
<path d="M6 5.5h4M6 8.5h4M6 11.5h4" stroke="#7a76a8"/>
</svg>
<div class="t" style="left:22px;top:177px;line-height:19px;letter-spacing:-0.05px">Указание крайнего срока, который должен пройти</div>
<svg style="left:5px;top:178px" width="13" height="15" viewBox="0 0 13 15">
<path d="M.5 .5h9l3 3v11H.5z" fill="#fff" stroke="#9c9c9c"/>
<path d="M9.5 1v2.5H12" fill="#eee" stroke="#c4c4c4"/>
<path d="M3 4h2v2H3zM3 10h2v2H3z" fill="#111"/><path d="M3 7h2v2H3z" fill="#8a86b8"/>
<path d="M6 5.5h4M6 8.5h4M6 11.5h4" stroke="#7a76a8"/>
</svg>
<div class="t" style="left:22px;top:196px;line-height:19px;letter-spacing:-0.05px">Настройка уведомлений с напоминанием об автоматическом перезапуске</div>
<svg style="left:5px;top:197px" width="13" height="15" viewBox="0 0 13 15">
<path d="M.5 .5h9l3 3v11H.5z" fill="#fff" stroke="#9c9c9c"/>
<path d="M9.5 1v2.5H12" fill="#eee" stroke="#c4c4c4"/>
<path d="M3 4h2v2H3zM3 10h2v2H3z" fill="#111"/><path d="M3 7h2v2H3z" fill="#8a86b8"/>
<path d="M6 5.5h4M6 8.5h4M6 11.5h4" stroke="#7a76a8"/>
</svg>
<div class="t" style="left:22px;top:215px;line-height:19px;letter-spacing:-0.05px">Отключение уведомлений об автоматическом перезапуске</div>
<svg style="left:5px;top:216px" width="13" height="15" viewBox="0 0 13 15">
<path d="M.5 .5h9l3 3v11H.5z" fill="#fff" stroke="#9c9c9c"/>
<path d="M9.5 1v2.5H12" fill="#eee" stroke="#c4c4c4"/>
<path d="M3 4h2v2H3zM3 10h2v2H3z" fill="#111"/><path d="M3 7h2v2H3z" fill="#8a86b8"/>
<path d="M6 5.5h4M6 8.5h4M6 11.5h4" stroke="#7a76a8"/>
</svg>
<div class="t" style="left:22px;top:234px;line-height:19px;letter-spacing:-0.05px">Настройка уведомлений об обязательном автоматическом перезапуске</div>
<svg style="left:5px;top:235px" width="13" height="15" viewBox="0 0 13 15">
<path d="M.5 .5h9l3 3v11H.5z" fill="#fff" stroke="#9c9c9c"/>
<path d="M9.5 1v2.5H12" fill="#eee" stroke="#c4c4c4"/>
<path d="M3 4h2v2H3zM3 10h2v2H3z" fill="#111"/><path d="M3 7h2v2H3z" fill="#8a86b8"/>
<path d="M6 5.5h4M6 8.5h4M6 11.5h4" stroke="#7a76a8"/>
</svg>
<div class="a" style="left:20px;top:253px;width:268px;height:19px;background:#0a68c4"></div>
<div class="t" style="left:22px;top:253px;line-height:19px;color:#fff;letter-spacing:-0.03px">Настройка автоматического обновления</div>
<div class="a" style="left:5px;top:254px;width:13px;height:15px;background:repeating-conic-gradient(#1b5fb0 0 25%,#d8e6f6 0 50%) 0 0/2px 2px"></div><div class="a" style="left:8px;top:258px;width:2px;height:2px;background:#111"></div><div class="a" style="left:8px;top:264px;width:2px;height:2px;background:#111"></div>
<div class="t" style="left:22px;top:272px;line-height:19px;letter-spacing:-0.05px">Указать размещение службы обновлений Майкрософт в интрасети</div>
<svg style="left:5px;top:273px" width="13" height="15" viewBox="0 0 13 15">
<path d="M.5 .5h9l3 3v11H.5z" fill="#fff" stroke="#9c9c9c"/>
<path d="M9.5 1v2.5H12" fill="#eee" stroke="#c4c4c4"/>
<path d="M3 4h2v2H3zM3 10h2v2H3z" fill="#111"/><path d="M3 7h2v2H3z" fill="#8a86b8"/>
<path d="M6 5.5h4M6 8.5h4M6 11.5h4" stroke="#7a76a8"/>
</svg>
<div class="t" style="left:22px;top:291px;line-height:19px;letter-spacing:-0.05px">Частота поиска автоматических обновлений</div>
<svg style="left:5px;top:292px" width="13" height="15" viewBox="0 0 13 15">
<path d="M.5 .5h9l3 3v11H.5z" fill="#fff" stroke="#9c9c9c"/>
<path d="M9.5 1v2.5H12" fill="#eee" stroke="#c4c4c4"/>
<path d="M3 4h2v2H3zM3 10h2v2H3z" fill="#111"/><path d="M3 7h2v2H3z" fill="#8a86b8"/>
<path d="M6 5.5h4M6 8.5h4M6 11.5h4" stroke="#7a76a8"/>
</svg>
<div class="t" style="left:22px;top:310px;line-height:19px;letter-spacing:-0.05px">Не разрешать политикам задержки получения обновлений</div>
<svg style="left:5px;top:311px" width="13" height="15" viewBox="0 0 13 15">
<path d="M.5 .5h9l3 3v11H.5z" fill="#fff" stroke="#9c9c9c"/>
<path d="M9.5 1v2.5H12" fill="#eee" stroke="#c4c4c4"/>
<path d="M3 4h2v2H3zM3 10h2v2H3z" fill="#111"/><path d="M3 7h2v2H3z" fill="#8a86b8"/>
<path d="M6 5.5h4M6 8.5h4M6 11.5h4" stroke="#7a76a8"/>
</svg>
<div class="t" style="left:22px;top:329px;line-height:19px;letter-spacing:-0.05px">Удалить доступ к функции "пауза обновления"</div>
<svg style="left:5px;top:330px" width="13" height="15" viewBox="0 0 13 15">
<path d="M.5 .5h9l3 3v11H.5z" fill="#fff" stroke="#9c9c9c"/>
<path d="M9.5 1v2.5H12" fill="#eee" stroke="#c4c4c4"/>
<path d="M3 4h2v2H3zM3 10h2v2H3z" fill="#111"/><path d="M3 7h2v2H3z" fill="#8a86b8"/>
<path d="M6 5.5h4M6 8.5h4M6 11.5h4" stroke="#7a76a8"/>
</svg>
<div class="t" style="left:22px;top:348px;line-height:19px;letter-spacing:-0.05px">Запретить доступ для использования любых средств центра обновления Windows</div>
<svg style="left:5px;top:349px" width="13" height="15" viewBox="0 0 13 15">
<path d="M.5 .5h9l3 3v11H.5z" fill="#fff" stroke="#9c9c9c"/>
<path d="M9.5 1v2.5H12" fill="#eee" stroke="#c4c4c4"/>
<path d="M3 4h2v2H3zM3 10h2v2H3z" fill="#111"/><path d="M3 7h2v2H3z" fill="#8a86b8"/>
<path d="M6 5.5h4M6 8.5h4M6 11.5h4" stroke="#7a76a8"/>
</svg>
</div>
<div class="a" style="left:767px;top:142px;width:16px;height:359px;background:#f0f0f0"></div>
<div class="a" style="left:767px;top:159px;width:15px;height:162px;background:#cdcdcd"></div>
<svg style="left:770px;top:148px" width="9" height="6" viewBox="0 0 9 6"><path d="M1 5L4.5 1L8 5" fill="none" stroke="#606060" stroke-width="2"/></svg>
<svg style="left:770px;top:488px" width="9" height="6" viewBox="0 0 9 6"><path d="M1 1L4.5 5L8 1" fill="none" stroke="#606060" stroke-width="2"/></svg>
<div class="a" style="left:479px;top:501px;width:304px;height:16px;background:#f0f0f0"></div>
<div class="a" style="left:496px;top:501px;width:112px;height:16px;background:#cdcdcd"></div>
<svg style="left:485px;top:504px" width="6" height="9" viewBox="0 0 6 9"><path d="M5 1L1 4.5L5 8" fill="none" stroke="#606060" stroke-width="2"/></svg>
<svg style="left:755px;top:504px" width="6" height="9" viewBox="0 0 6 9"><path d="M1 1L5 4.5L1 8" fill="none" stroke="#606060" stroke-width="2"/></svg>
<div class="a" style="left:267px;top:517px;width:516px;height:21px;background:#f0f0f0"></div>
<div class="a" style="left:267px;top:517px;width:516px;height:1px;background:#dcdcdc"></div>
<svg style="left:260px;top:515px" width="525" height="25" viewBox="0 0 525 25">
<path d="M4.5 3.5L13.5 22.5H99L107.5 3.5z" fill="#fff"/>
<path d="M107 4.5H525" stroke="#646464" stroke-width="1"/>
<path d="M4.5 3.5L13.5 22.5M99 22.5L107.5 4" fill="none" stroke="#505050" stroke-width="1"/>
<path d="M103.5 13L108.5 22.5M186 22.5L193.5 4.5" fill="none" stroke="#505050" stroke-width="1"/>
<path d="M2 22.5H525" stroke="#a8a8a8"/>
</svg>
<div class="t" style="left:276px;top:521px;line-height:16px;">Расширенный</div>
<div class="t" style="left:371px;top:521px;line-height:16px;">Стандартный</div>
<svg style="left:0;top:0" width="818" height="594" viewBox="0 0 818 594">
<defs><filter id="sh" x="-20%" y="-50%" width="140%" height="200%"><feGaussianBlur in="SourceAlpha" stdDeviation="2.5"/><feOffset dx="2" dy="4" result="o"/><feFlood flood-color="#000" flood-opacity=".45"/><feComposite in2="o" operator="in"/><feMerge><feMergeNode/><feMergeNode in="SourceGraphic"/></feMerge></filter></defs>
<g filter="url(#sh)" fill="none" stroke="#ff0000" stroke-width="4" stroke-linecap="round" stroke-linejoin="round">
<rect x="36.5" y="349" width="208" height="21" rx="10.5"/>
<path d="M242.5 369.6L477 399.2M464.2 389.8L477.5 399.2L463.2 403.8"/>
<rect x="479.5" y="394" width="288" height="18.5" rx="9"/>
</g></svg></body></html>
